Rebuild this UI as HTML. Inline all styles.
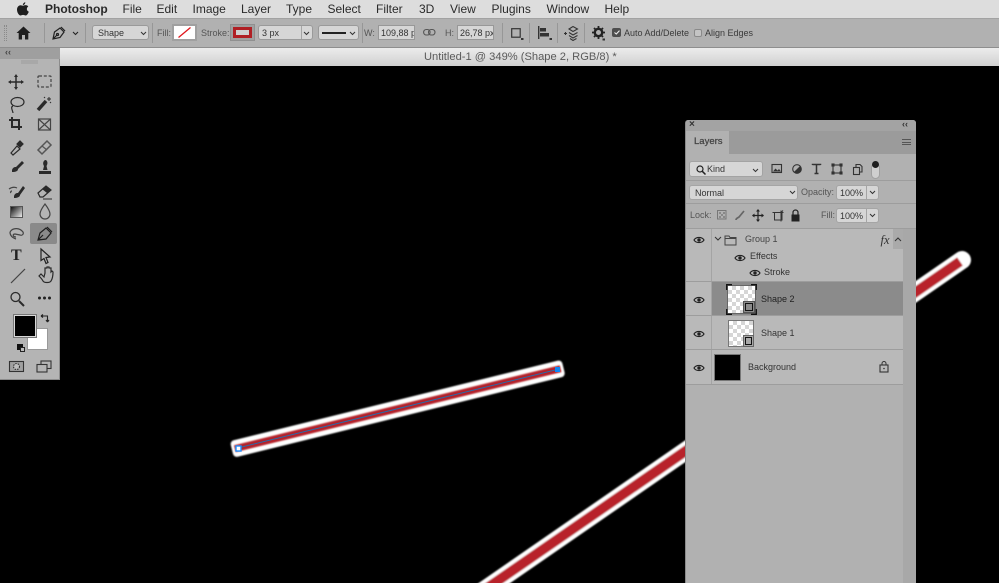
<!DOCTYPE html>
<html><head><meta charset="utf-8"><style>
html,body{margin:0;padding:0;width:999px;height:583px;overflow:hidden;background:#000}
*{box-sizing:border-box}
body{font-family:"Liberation Sans",sans-serif;position:relative}
#w{position:absolute;left:0;top:0;width:999px;height:583px;filter:blur(.3px)}
.a{position:absolute}
.t{position:absolute;white-space:nowrap;line-height:1}
.m{font-size:12px;color:#2a2a2a;top:3px}
.o{font-size:9px;color:#555;top:28.5px}
.box{position:absolute;background:#d6d6d6;border:1px solid #9a9a9a;border-radius:3px}
.p{font-size:9px;color:#333}
.sep{position:absolute;width:1px;background:#979797}
svg{position:absolute;overflow:visible}
.hl{position:absolute;height:1px;background:#9d9d9d}
</style></head><body><div id="w">
<!-- canvas -->
<svg class="a" style="left:0;top:0" width="999" height="583" viewBox="0 0 999 583" fill="none">
<defs><filter id="b1" x="-5%" y="-20%" width="110%" height="140%"><feGaussianBlur stdDeviation=".8"/></filter></defs>
<g transform="translate(237.7 448) rotate(-13.8)">
<rect x="-6" y="-8.500" width="341.500" height="17" rx="4" fill="#fff" filter="url(#b1)"/>
<rect x="-3" y="-3.500" width="335.500" height="7" fill="#b3232a" filter="url(#b1)"/>
<rect x="0" y="-.5" width="329.500" height="1" fill="#2a6aa8"/>
</g>
<g stroke-linecap="round" filter="url(#b1)">
<path d="M480 593L962 260" stroke="#fff" stroke-width="18"/>
<path d="M480 593L960 261.500" stroke="#b8242a" stroke-width="10" stroke-linecap="butt"/>
</g>
<rect x="236" y="446" width="5" height="5" fill="#fff" stroke="#1e90ff" stroke-width="1.400"/>
<rect x="555" y="367" width="5" height="5" fill="#0f87f5"/>
</svg>

<!-- menu bar -->
<div class="a" style="left:0;top:0;width:999px;height:18px;background:#dddddd"></div>
<svg style="left:17px;top:2px" width="12" height="14" viewBox="0 0 12 14"><path d="M8.3 0.3c.1 1.3-1 2.8-2.4 2.8C5.700 1.800 7 .4 8.300.3zM6 3.700c.7 0 1.500-.6 2.700-.6 1 0 2 .5 2.600 1.400-2.200 1.300-1.800 4.300.5 5.200-.6 1.500-1.800 3.800-3.200 3.800-1 0-1.300-.6-2.500-.6s-1.600.6-2.500.6C1.900 13.500 0 10.400 0 7.600 0 5 1.700 3.200 3.500 3.200c1 0 1.900.5 2.500.5z" fill="#1f1f1f"/></svg>
<div class="t m" style="left:45px;font-weight:bold">Photoshop</div>
<div class="t m" style="left:122.500px">File</div>
<div class="t m" style="left:156.500px">Edit</div>
<div class="t m" style="left:192.500px">Image</div>
<div class="t m" style="left:241px">Layer</div>
<div class="t m" style="left:286px">Type</div>
<div class="t m" style="left:327.500px">Select</div>
<div class="t m" style="left:376px">Filter</div>
<div class="t m" style="left:419px">3D</div>
<div class="t m" style="left:450px">View</div>
<div class="t m" style="left:491.500px">Plugins</div>
<div class="t m" style="left:546.500px">Window</div>
<div class="t m" style="left:604.500px">Help</div>

<!-- options bar -->
<div class="a" style="left:0;top:18px;width:999px;height:30px;background:#b1b1b1;border-top:1px solid #a2a2a2;border-bottom:1px solid #8e8e8e"></div>
<div class="a" style="left:4px;top:25px;width:3px;height:16px;border-left:1px dotted #8a8a8a;border-right:1px dotted #8a8a8a"></div>
<svg style="left:16px;top:26px" width="15" height="14" viewBox="0 0 15 14"><path d="M7.500 0.500L14.500 7H12.300V13.500H9V9H6V13.500H2.700V7H.5z" fill="#1e1e1e"/></svg>
<div class="sep" style="left:44px;top:23px;height:20px"></div>
<svg style="left:52px;top:26px" width="14" height="14" viewBox="0 0 14 14" fill="none" stroke="#222" stroke-width="1.200"><path d="M1 13L2.500 6 8 2l4 4-4 5.500zM1 13L5 9M9 1l4 4"/><circle cx="5.500" cy="8.500" r="1"/></svg>
<svg style="left:72px;top:31px" width="7" height="5" viewBox="0 0 7 5" fill="none" stroke="#222" stroke-width="1.100"><path d="M1 1l2.500 2.500L6 1"/></svg>
<div class="sep" style="left:85px;top:23px;height:20px"></div>
<div class="box" style="left:92px;top:25px;width:57px;height:15px"></div>
<div class="t p" style="left:98px;top:28.500px">Shape</div>
<svg style="left:140px;top:31px" width="7" height="5" viewBox="0 0 7 5" fill="none" stroke="#333" stroke-width="1"><path d="M1 1l2.500 2.500L6 1"/></svg>
<div class="sep" style="left:152px;top:23px;height:20px"></div>
<div class="t o" style="left:157px">Fill:</div>
<div class="a" style="left:172px;top:24px;width:25px;height:17px;background:#fff;border:2px solid #a0a0a0"></div>
<svg style="left:178px;top:27px" width="13" height="11" viewBox="0 0 13 11"><path d="M.5 10.500L12.500 .5" stroke="#e0161c" stroke-width="1.300"/></svg>
<div class="t o" style="left:201px">Stroke:</div>
<div class="a" style="left:230px;top:24px;width:25px;height:17px;background:#a0a0a0;border:1px solid #909090"></div>
<div class="a" style="left:233px;top:27px;width:19px;height:11px;background:#d0d0d0;border:3px solid #b01f24"></div>
<div class="box" style="left:258px;top:25px;width:55px;height:15px"></div>
<div class="a" style="left:301px;top:26px;width:1px;height:13px;background:#a5a5a5"></div>
<div class="t p" style="left:262px;top:28.500px">3 px</div>
<svg style="left:303px;top:31px" width="7" height="5" viewBox="0 0 7 5" fill="none" stroke="#333" stroke-width="1"><path d="M1 1l2.500 2.500L6 1"/></svg>
<div class="box" style="left:318px;top:25px;width:41px;height:15px"></div>
<div class="a" style="left:322px;top:32px;width:24px;height:1.500px;background:#222"></div>
<svg style="left:349px;top:31px" width="7" height="5" viewBox="0 0 7 5" fill="none" stroke="#333" stroke-width="1"><path d="M1 1l2.500 2.500L6 1"/></svg>
<div class="sep" style="left:362px;top:23px;height:20px"></div>
<div class="t o" style="left:364px">W:</div>
<div class="a" style="left:378px;top:25px;width:37px;height:15px;background:#d6d6d6;border:1px solid #989898;overflow:hidden"><div class="t p" style="left:2px;top:3px;">109,88 px</div></div>
<svg style="left:423px;top:28px" width="13" height="9" viewBox="0 0 13 9" fill="none" stroke="#555" stroke-width="1.100"><rect x=".6" y="1.500" width="6.500" height="5.500" rx="2.700"/><rect x="5.500" y="1.500" width="6.500" height="5.500" rx="2.700"/></svg>
<div class="t o" style="left:445px">H:</div>
<div class="a" style="left:457px;top:25px;width:37px;height:15px;background:#d6d6d6;border:1px solid #989898;overflow:hidden"><div class="t p" style="left:2px;top:3px;">26,78 px</div></div>
<div class="sep" style="left:502px;top:23px;height:20px"></div>
<svg style="left:511px;top:28px" width="13" height="13" viewBox="0 0 13 13" fill="none"><rect x=".7" y=".7" width="8.500" height="8.500" stroke="#333" stroke-width="1.200"/><rect x="10" y="10" width="2.500" height="2" fill="#333"/></svg>
<div class="sep" style="left:529px;top:23px;height:20px"></div>
<svg style="left:538px;top:26px" width="15" height="15" viewBox="0 0 15 15"><rect x="0" y="0" width="1.400" height="13" fill="#333"/><rect x="2" y="2" width="6" height="3.500" fill="#333"/><rect x="2" y="7" width="9" height="3.500" fill="#333"/><rect x="11.500" y="12" width="2.500" height="2" fill="#333"/></svg>
<div class="sep" style="left:557px;top:23px;height:20px"></div>
<svg style="left:563px;top:26px" width="16" height="15" viewBox="0 0 16 15" fill="none" stroke="#333" stroke-width="1.100"><path d="M1 7.500h3M2.500 6v3"/><path d="M6 3l4-2.500L14.500 3 10 5.500zM6 6.500l4 2.500 4.500-2.500M6 9.500l4 2.500 4.500-2.500M7 12.500l3 2 3.500-2"/></svg>
<div class="sep" style="left:584px;top:23px;height:20px"></div>
<svg style="left:592px;top:26px" width="14" height="15" viewBox="0 0 14 15" fill="none"><circle cx="6.500" cy="6.500" r="3.700" stroke="#222" stroke-width="2.400"/><path d="M6.500 0v13M0 6.500h13M2 2l9 9M11 2l-9 9" stroke="#222" stroke-width="1.800" stroke-dasharray="2 9"/><rect x="10.500" y="12.500" width="2.500" height="2" fill="#333"/></svg>
<div class="a" style="left:612px;top:28px;width:9px;height:9px;background:#4e4e4e;border-radius:2px"></div>
<svg style="left:613.500px;top:30px" width="6" height="5" viewBox="0 0 6 5" fill="none" stroke="#eee" stroke-width="1.100"><path d="M.5 2.500L2.300 4 5.500.6"/></svg>
<div class="t" style="left:624px;top:28.500px;font-size:9px;color:#3a3a3a">Auto Add/Delete</div>
<div class="a" style="left:694px;top:28.500px;width:8px;height:8px;background:#c4c4c4;border:1px solid #8a8a8a;border-radius:2px"></div>
<div class="t" style="left:705px;top:28.500px;font-size:9px;color:#3a3a3a">Align Edges</div>

<!-- tab bar -->
<div class="a" style="left:0;top:48px;width:999px;height:18px;background:linear-gradient(#ececec,#d0d0d0)"></div>
<div class="t" style="left:424px;top:51.500px;font-size:11.150px;color:#5a5a5a">Untitled-1 @ 349% (Shape 2, RGB/8) *</div>

<!-- toolbox -->
<div class="a" style="left:0;top:48px;width:60px;height:332px;background:#b4b4b4;border-right:1px solid #8c8c8c;border-bottom:1px solid #8c8c8c"></div>
<div class="a" style="left:0;top:48px;width:60px;height:11px;background:#9f9f9f"></div>
<div class="t" style="left:5px;top:47.500px;font-size:9px;color:#444;font-weight:bold">‹‹</div>
<div class="a" style="left:21px;top:60px;width:17px;height:4px;background:#a8a8a8"></div>
<div class="a" style="left:30px;top:223px;width:27px;height:21px;background:#8a8a8a;border-radius:2px"></div>
<svg style="left:0;top:0" width="60" height="380" viewBox="0 0 60 380" fill="none" stroke="#2a2a2a" stroke-width="1.200">
<!-- move -->
<path d="M16 76v12M10 82h12" stroke-width="1.500"/><path d="M16 74l-2 3h4zM16 90l-2-3h4zM8 82l3-2v4zM24 82l-3-2v4z" fill="#2a2a2a" stroke="none"/>
<!-- marquee -->
<rect x="38" y="76" width="13" height="11" rx="1" stroke-dasharray="3 1.800" stroke-width="1.200" stroke="#444"/>
<!-- lasso -->
<ellipse cx="17.500" cy="102" rx="6.500" ry="4.500"/><path d="M13 106c-3 1 0 5 0 7"/>
<!-- wand -->
<path d="M38 110l8-9" stroke-width="3.500"/><path d="M49 97v4M47 99h4M44 97l1 1M51 103l-1-1" stroke-width="1"/>
<!-- crop -->
<path d="M12 117v10h10M9 120h10v10" stroke-width="2" />
<!-- slice frame -->
<rect x="38.500" y="119" width="12" height="11" stroke="#444"/><path d="M38.500 119l12 11M50.500 119l-12 11" stroke="#444"/>
<!-- eyedropper -->
<path d="M11 153l6-7 3 3-7 6z" stroke-width="1.200"/><path d="M17 144l3-3 3 3-3 3z" fill="#2a2a2a"/>
<!-- healing -->
<path d="M38 150l9-9 4 4-9 9z" stroke="#555" stroke-width="1.500"/><path d="M42 146l5 4" stroke="#555"/>
<!-- brush -->
<path d="M12 170c1-3 3-3 4-3l6-6 2 2-6 6c0 2-2 3-6 3z" fill="#2a2a2a" stroke="none"/>
<!-- stamp -->
<path d="M39 171h12v3H39z" fill="#2a2a2a" stroke="none"/><path d="M43 170l1-4c-2-3 0-6 1.500-6s3 3 1 6l1 4z" fill="#2a2a2a" stroke="none"/>
<!-- history brush -->
<path d="M14 196c1-3 3-3 4-3l5-7 2 2-5 7c0 2-3 3-6 3z" fill="#2a2a2a" stroke="none"/><path d="M9 189c3-2 6-2 8-1M11 193c-1-1 0-2 1-2" stroke="#444"/>
<!-- eraser -->
<path d="M38 193l8-7 5 4-8 7h-3z" stroke="#2a2a2a"/><path d="M42 189l5 4 4-3-5-4z" fill="#2a2a2a" stroke="none"/><path d="M43 199h9" stroke="#444"/>
<!-- smudge drop -->
<path d="M45 204c-3 4-5 7-5 10a5 5 0 0 0 10 0c0-3-2-6-5-10z" stroke="#444"/>
<!-- shape lasso -->
<path d="M10 232c3-5 10-4 13 0 1 2-1 4-3 3l-5-1c-3 0-2 3 1 3M10 232c0 4 3 6 6 7" stroke="#444"/>
<!-- pen selected -->
<path d="M38 240l2-7 6-5 5 5-5 6zM38 240l5-5M47 227l5 5" stroke="#1e1e1e"/>
<!-- path select -->
<path d="M41 249l9 8-4 .5 2 5-2 1-2-5-3 2z" stroke="#222"/>
<!-- line -->
<path d="M11 283l14-14" stroke="#444"/>
<!-- hand -->
<path d="M39 276c2 2 3 3 4 5 1 2 7 2 8 0 2-3 2-6 2-9l-1-1-1 1v-4h-2v-1h-2v1h-2v5l-1 4-3-3z" stroke="#2a2a2a"/>
<!-- zoom -->
<circle cx="15.500" cy="297" r="4.500" stroke-width="1.300"/><path d="M19 301l5 5" stroke-width="2"/>
<!-- more dots -->
<circle cx="39.500" cy="298" r="1.500" fill="#222" stroke="none"/><circle cx="44.500" cy="298" r="1.500" fill="#222" stroke="none"/><circle cx="49.500" cy="298" r="1.500" fill="#222" stroke="none"/>
</svg>
<div class="a" style="left:10px;top:206px;width:13px;height:12px;background:linear-gradient(135deg,#111,#eee);border:1px solid #555"></div>
<div class="t" style="left:11px;top:248px;font-size:16px;font-weight:bold;color:#222;font-family:'Liberation Serif',serif">T</div>
<!-- fg/bg -->
<div class="a" style="left:27px;top:328px;width:21px;height:22px;background:#fff;border:1px solid #999"></div>
<div class="a" style="left:14px;top:315px;width:22px;height:22px;background:#000;border:1px solid #d8d8d8;outline:1px solid #777"></div>
<svg style="left:40px;top:314px" width="10" height="10" viewBox="0 0 10 10" fill="none" stroke="#222" stroke-width="1.100"><path d="M1 2h6.500v6M1 2l2-1.500M1 2l2 1.500M7.500 8L6 6M7.500 8L9 6"/></svg>
<div class="a" style="left:17px;top:344px;width:6px;height:6px;background:#111"></div>
<div class="a" style="left:19.500px;top:346.500px;width:5px;height:5px;background:#bbb;border:1px solid #222"></div>
<svg style="left:8px;top:360px" width="46" height="14" viewBox="0 0 46 14" fill="none" stroke="#333" stroke-width="1.100"><rect x="1.500" y="1.500" width="14" height="10" fill="#a0a0a0"/><circle cx="8.500" cy="6.500" r="3" stroke-dasharray="1.500 1" fill="#bdbdbd"/><rect x="33" y="1" width="10" height="7.500"/><rect x="29" y="4.500" width="10" height="7.500" fill="#b4b4b4"/></svg>

<!-- Layers panel -->
<div class="a" style="left:685px;top:120px;width:231px;height:463px;background:#b1b1b1;border-radius:3px 3px 0 0;border-left:1px solid #8a8a8a"></div>
<div class="a" style="left:686px;top:120px;width:230px;height:11px;background:#a3a3a3;border-radius:3px 3px 0 0"></div>
<div class="t" style="left:689px;top:120px;font-size:10px;font-weight:bold;color:#333">×</div>
<div class="t" style="left:902px;top:120px;font-size:9px;color:#333;font-weight:bold">‹‹</div>
<div class="a" style="left:686px;top:131px;width:230px;height:23px;background:#9b9b9b"></div>
<div class="a" style="left:686px;top:131px;width:43px;height:24px;background:#b1b1b1"></div>
<div class="t" style="left:694px;top:137px;font-size:9.500px;color:#444;-webkit-text-stroke:.25px #444">Layers</div>
<div class="a" style="left:902px;top:139px;width:9px;height:6px;border-top:1.500px solid #555;border-bottom:1.500px solid #555"></div><div class="a" style="left:902px;top:141.500px;width:9px;height:1.500px;background:#555"></div>
<div class="hl" style="left:686px;top:180px;width:230px"></div>
<div class="hl" style="left:686px;top:203px;width:230px"></div>
<div class="hl" style="left:686px;top:228px;width:230px"></div>
<!-- kind row -->
<div class="box" style="left:689px;top:161px;width:74px;height:16px;border-color:#a3a3a3"></div>
<svg style="left:696px;top:165px" width="10" height="10" viewBox="0 0 10 10" fill="none" stroke="#222" stroke-width="1.200"><circle cx="4" cy="4" r="3"/><path d="M6.300 6.300L9.500 9.500" stroke-width="1.500"/></svg>
<div class="t p" style="left:707px;top:165px;color:#333">Kind</div>
<svg style="left:752px;top:168px" width="7" height="5" viewBox="0 0 7 5" fill="none" stroke="#333"><path d="M1 1l2.500 2.500L6 1"/></svg>
<svg style="left:770px;top:162px" width="112" height="16" viewBox="0 0 112 16" fill="none" stroke="#333" stroke-width="1.100">
<rect x="2" y="2.500" width="9.500" height="8" /><path d="M3 9.500l2.500-3 2 2 1.500-1.500 2 2.500z" fill="#333" stroke="none"/>
<circle cx="27" cy="7" r="4.300"/><path d="M27 2.700a4.300 4.300 0 0 0 0 8.600z" transform="rotate(225 27 7)" fill="#333" stroke="none"/>
<path d="M42.500 3V2.500h8V3M46.500 2.500v9M44.500 11.500h4" stroke-width="1.500"/>
<rect x="63" y="3" width="8" height="8"/><rect x="62" y="2" width="2" height="2" fill="#333"/><rect x="70" y="2" width="2" height="2" fill="#333"/><rect x="62" y="10" width="2" height="2" fill="#333"/><rect x="70" y="10" width="2" height="2" fill="#333"/>
<path d="M86 5V2.500h4l2 2V10h-2"/><rect x="83.500" y="5.500" width="6" height="7"/>
</svg>
<div class="a" style="left:871px;top:163px;width:9px;height:16px;background:#cfcfcf;border-radius:5px;border:1px solid #a0a0a0"></div>
<div class="a" style="left:872px;top:161px;width:7px;height:7px;background:#1e1e1e;border-radius:50%"></div>
<!-- blend row -->
<div class="box" style="left:689px;top:185px;width:109px;height:15px;border-color:#a5a5a5"></div>
<div class="t p" style="left:695px;top:188.500px;color:#333">Normal</div>
<svg style="left:789px;top:190px" width="7" height="5" viewBox="0 0 7 5" fill="none" stroke="#333"><path d="M1 1l2.500 2.500L6 1"/></svg>
<div class="t" style="left:801px;top:187.500px;font-size:9px;color:#555">Opacity:</div>
<div class="box" style="left:836px;top:185px;width:43px;height:15px;border-color:#a5a5a5"></div>
<div class="a" style="left:866px;top:186px;width:1px;height:13px;background:#a5a5a5"></div>
<div class="t p" style="left:840px;top:188.500px;color:#333">100%</div>
<svg style="left:869px;top:190px" width="7" height="5" viewBox="0 0 7 5" fill="none" stroke="#333"><path d="M1 1l2.500 2.500L6 1"/></svg>
<!-- lock row -->
<div class="t" style="left:690px;top:211px;font-size:9px;color:#555">Lock:</div>
<svg style="left:716px;top:208px" width="90" height="15" viewBox="0 0 90 15" fill="none" stroke="#444" stroke-width="1">
<rect x="1.500" y="2.500" width="8.500" height="8.500" stroke="#777"/><path d="M3 4h2v2H3zM7 4h2v2H7zM5 6h2v2H5zM3 8h2v2H3zM7 8h2v2H7z" fill="#888" stroke="none"/>
<path d="M20 12c0-2 2-2 3-3l5-6" stroke="#666" stroke-width="1.700"/>
<path d="M42 2v11M36.500 7.500h11" stroke="#222" stroke-width="1.200"/><path d="M42 1l-2 2.500h4zM42 14l-2-2.500h4zM36 7.500l2.500-2v4zM48 7.500l-2.500-2v4z" fill="#222" stroke="none"/>
<rect x="58.500" y="4.500" width="7.500" height="7.500" stroke="#333"/><path d="M56.500 4.500h11M65 2.500v11M67 2.500l-2 2" stroke="#333"/>
<rect x="75.500" y="6.500" width="8" height="7" fill="#222" stroke="none"/><path d="M77 7V4.500a2.500 2.500 0 0 1 5 0V7" stroke="#222" stroke-width="1.200"/>
</svg>
<div class="t" style="left:821px;top:211px;font-size:9px;color:#555">Fill:</div>
<div class="box" style="left:836px;top:208px;width:43px;height:15px;border-color:#a5a5a5"></div>
<div class="a" style="left:866px;top:209px;width:1px;height:13px;background:#a5a5a5"></div>
<div class="t p" style="left:840px;top:211.500px;color:#333">100%</div>
<svg style="left:869px;top:213px" width="7" height="5" viewBox="0 0 7 5" fill="none" stroke="#333"><path d="M1 1l2.500 2.500L6 1"/></svg>

<!-- layer list -->
<div class="a" style="left:686px;top:229px;width:217px;height:156px;background:#b9b9b9"></div>
<div class="a" style="left:711px;top:229px;width:1px;height:156px;background:#a4a4a4"></div>
<div class="a" style="left:903px;top:229px;width:13px;height:354px;background:#a8a8a8"></div>
<div class="a" style="left:893px;top:229px;width:10px;height:20px;background:#aaaaaa"></div>
<svg style="left:894px;top:237px" width="8" height="5" viewBox="0 0 8 5" fill="none" stroke="#333"><path d="M1 4l3-3 3 3"/></svg>
<div class="a" style="left:712px;top:281px;width:191px;height:35px;background:#8b8b8b"></div>
<div class="hl" style="left:686px;top:281px;width:217px"></div>
<div class="hl" style="left:686px;top:315px;width:217px"></div>
<div class="hl" style="left:686px;top:349px;width:217px"></div>
<div class="hl" style="left:686px;top:384px;width:217px"></div>
<!-- eyes -->
<svg style="left:0;top:0" width="999" height="583" viewBox="0 0 999 583">
<defs><g id="eye"><path d="M-5 0C-3-3.400 3-3.400 5 0 3 3.400-3 3.400-5 0z" fill="none" stroke="#222" stroke-width="1.200"/><circle r="1.700" fill="#222"/></g></defs>
<use href="#eye" x="699" y="240"/><use href="#eye" x="740" y="258"/><use href="#eye" x="755" y="273"/>
<use href="#eye" x="699" y="300"/><use href="#eye" x="699" y="334"/><use href="#eye" x="699" y="368"/>
<path d="M715 237l3 3 3-3" fill="none" stroke="#333"/>
<path d="M725 236h4l1 1.500h6v7.500h-11zM725 238.500h11" fill="none" stroke="#444"/>
<rect x="880" y="365" width="8" height="7" fill="none" stroke="#333" stroke-width="1.100"/><path d="M882 365v-1.500a2 2 0 0 1 4 0V365" fill="none" stroke="#333"/><circle cx="884" cy="368.500" r=".8" fill="#333"/>
</svg>
<div class="t" style="left:880.500px;top:233.500px;font-size:12.500px;font-style:italic;font-family:'Liberation Serif',serif;color:#333">fx</div>
<div class="t p" style="left:745px;top:235px;color:#444">Group 1</div>
<div class="t p" style="left:750px;top:252px;color:#333">Effects</div>
<div class="t p" style="left:764px;top:268px;color:#333">Stroke</div>
<div class="t p" style="left:761px;top:294.500px;color:#222">Shape 2</div>
<div class="t p" style="left:761px;top:328.500px;color:#333">Shape 1</div>
<div class="t p" style="left:748px;top:362.500px;color:#333">Background</div>
<!-- thumbs -->
<div class="a" style="left:727px;top:285px;width:29px;height:29px;border:1px solid #666;background:#fff;background-image:conic-gradient(#d6d6d6 25%,#fff 0 50%,#d6d6d6 0 75%,#fff 0);background-size:8px 8px"></div>
<svg style="left:726px;top:284px" width="31" height="31" viewBox="0 0 31 31" fill="none" stroke="#111" stroke-width="1.300"><path d="M.7 6V.7H6M25 .7h5.300V6M.7 25v5.300H6M25 30.300h5.300V25"/></svg>
<div class="a" style="left:728px;top:320px;width:26px;height:27px;border:1px solid #777;background:#fff;background-image:conic-gradient(#d6d6d6 25%,#fff 0 50%,#d6d6d6 0 75%,#fff 0);background-size:8px 8px"></div>
<div class="a" style="left:743px;top:301px;width:12px;height:12px;background:#8b8b8b;border:1px solid #555"></div>
<div class="a" style="left:745px;top:303px;width:8px;height:8px;border:1px solid #111"></div>
<div class="a" style="left:743px;top:335px;width:11px;height:12px;background:#a8a8a8;border:1px solid #666"></div>
<div class="a" style="left:745px;top:337px;width:7px;height:8px;border:1px solid #111"></div>
<div class="a" style="left:714px;top:354px;width:27px;height:27px;background:#000;border:1px solid #777"></div>
</div></body></html>
